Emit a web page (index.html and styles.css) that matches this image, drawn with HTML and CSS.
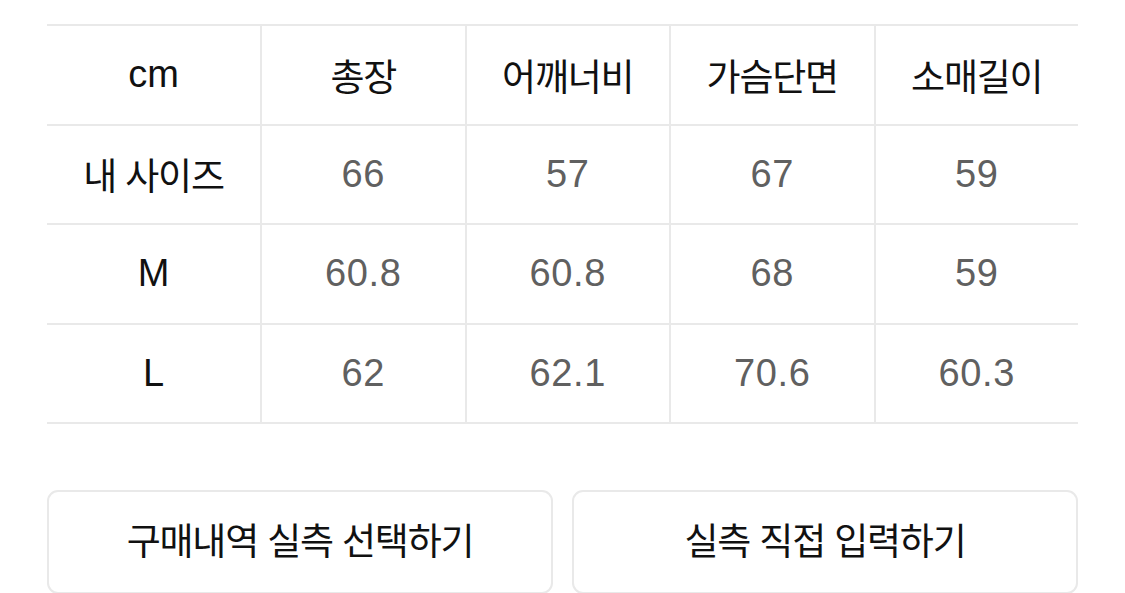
FILE: index.html
```html
<!DOCTYPE html>
<html lang="ko">
<head>
<meta charset="utf-8">
<link rel="stylesheet" href="styles.css">
</head>
<body>
<div class="page">
  <div class="size-table">
    <div class="cell head label latin">cm</div>
    <div class="cell head ko">총장</div>
    <div class="cell head ko">어깨너비</div>
    <div class="cell head ko">가슴단면</div>
    <div class="cell head ko">소매길이</div>

    <div class="cell label ko">내 사이즈</div>
    <div class="cell num">66</div>
    <div class="cell num">57</div>
    <div class="cell num">67</div>
    <div class="cell num">59</div>

    <div class="cell label latin">M</div>
    <div class="cell num">60.8</div>
    <div class="cell num">60.8</div>
    <div class="cell num">68</div>
    <div class="cell num">59</div>

    <div class="cell label latin">L</div>
    <div class="cell num">62</div>
    <div class="cell num">62.1</div>
    <div class="cell num">70.6</div>
    <div class="cell num">60.3</div>
  </div>
  <div class="actions">
    <button class="btn">구매내역 실측 선택하기</button>
    <button class="btn">실측 직접 입력하기</button>
  </div>
</div>
</body>
</html>
```
FILE: styles.css
```css
html, body {
  margin: 0;
  padding: 0;
  background: #fff;
}
body {
  font-family: "Liberation Sans", "Noto Sans CJK KR", sans-serif;
  color: #111;
}
.page {
  padding: 24px 47px 0 47px;
}
.size-table {
  display: grid;
  grid-template-columns: 213px repeat(4, 1fr);
  grid-auto-rows: 99.5px;
  border-top: 2px solid #e9e9e9;
}
.cell {
  display: flex;
  align-items: center;
  justify-content: center;
  border-bottom: 2px solid #e9e9e9;
  border-left: 2px solid #e9e9e9;
  box-sizing: border-box;
}
.cell.label {
  border-left: none;
  color: #111;
}
.latin {
  font-family: "Liberation Sans", sans-serif;
  font-size: 38px;
}
.ko {
  font-family: "Noto Sans CJK KR", sans-serif;
  font-size: 37px;
  letter-spacing: -1.2px;
}
.num {
  font-family: "Liberation Sans", sans-serif;
  font-size: 38px;
  letter-spacing: 0.6px;
  color: #606060;
}
.actions {
  display: flex;
  gap: 19px;
  margin-top: 66px;
}
.btn {
  flex: 1;
  height: 104px;
  background: #fff;
  border: 2px solid #e9e9e9;
  border-radius: 11px;
  font-family: "Noto Sans CJK KR", sans-serif;
  font-size: 37px;
  color: #111;
  letter-spacing: -1.2px;
  padding: 0 0 6px 0;
}
```
